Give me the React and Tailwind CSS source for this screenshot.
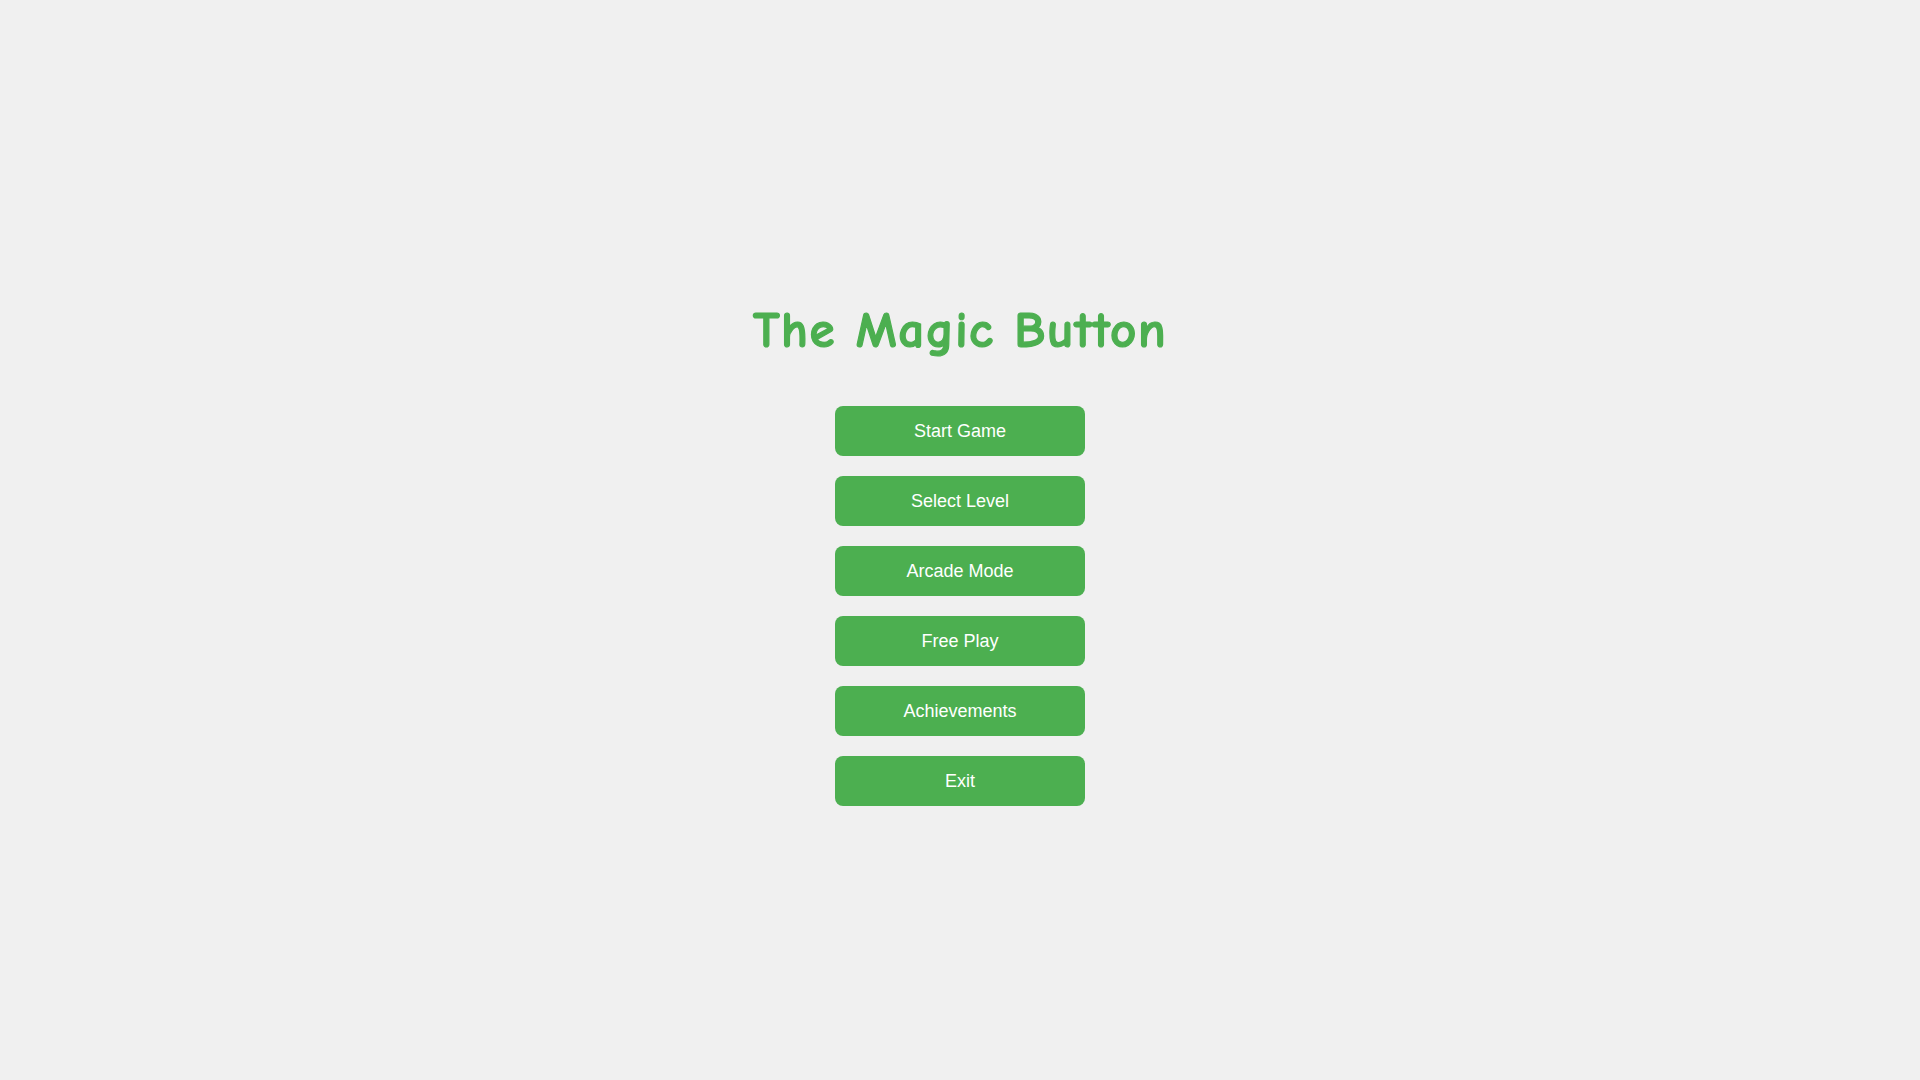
import React from 'react';

const items = ['Start Game', 'Select Level', 'Arcade Mode', 'Free Play', 'Achievements', 'Exit'];

export default function App() {
  return (
    <div className="min-h-screen w-full bg-[#f0f0f0] flex flex-col items-center justify-center">
      {/* title: Comic Sans in the original, closest installed fallback gets a stroke to look heavier */}
      <h1 className="my-[32px] text-[51px] leading-[67px] tracking-[1.5px] font-bold text-[#4caf50] [-webkit-text-stroke:1.2px_#4caf50] font-['Comic_Sans_MS','Comic_Neue','Noto_Sans',cursive]">
        The Magic Button
      </h1>
      <div className="flex flex-col gap-[20px] py-[10px]">
        {items.map((label) => (
          <button
            key={label}
            className="w-[250px] h-[50px] rounded-[8px] bg-[#4caf50] text-white text-[18px] pt-[1px] font-['Liberation_Sans',Arial,sans-serif]"
          >
            {label}
          </button>
        ))}
      </div>
    </div>
  );
}
